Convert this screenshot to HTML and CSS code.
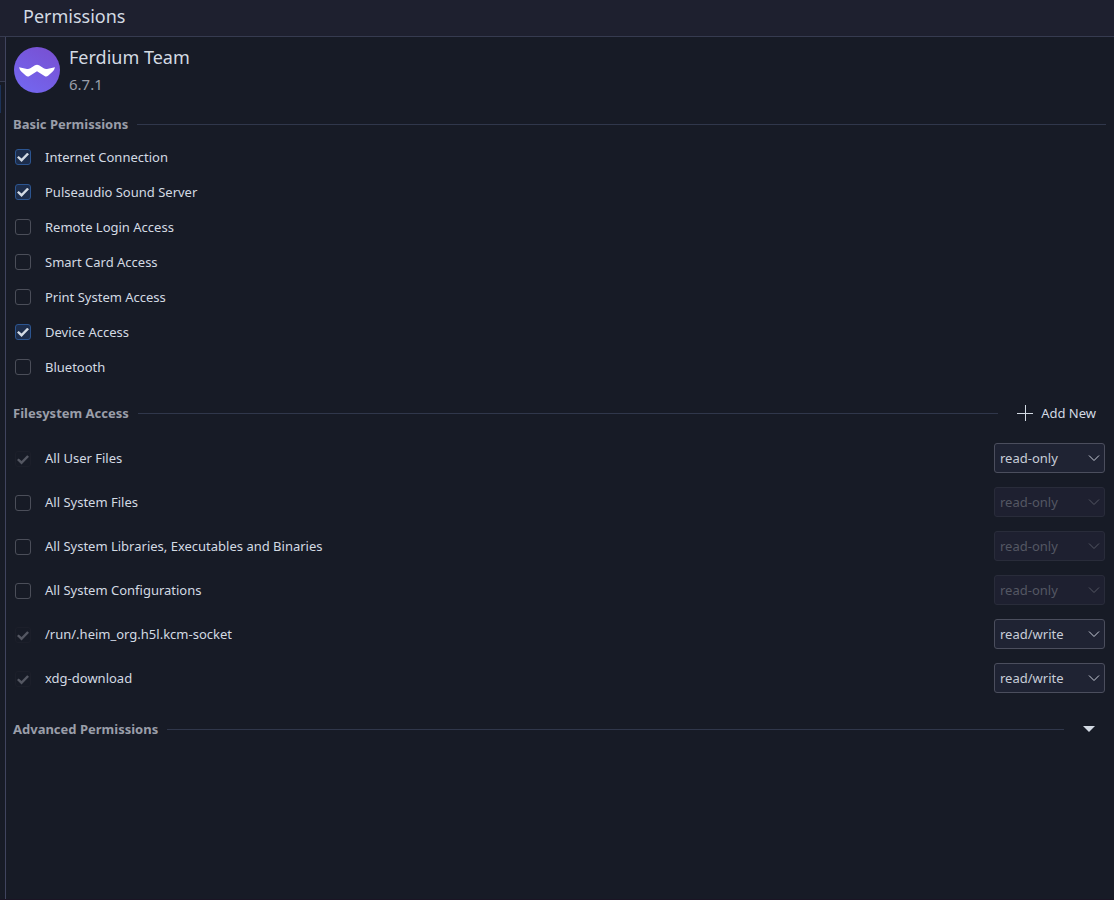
FILE: index.html
```html
<!DOCTYPE html>
<html lang="en">
<head>
    <meta charset="UTF-8">
    <meta name="viewport" content="width=device-width, initial-scale=1.0">
    <title>Permissions</title>
    <link rel="stylesheet" href="styles.css">
</head>
<body>
    <header class="titlebar">
        <h1>Permissions</h1>
    </header>

    <div class="window">
        <div class="sidebar">
            <div class="sidebar-search"></div>
            <div class="sidebar-item"></div>
        </div>

        <main class="content">
            <div class="app">
                <svg class="app-logo" viewBox="0 0 46 46" aria-hidden="true">
                    <defs>
                        <linearGradient id="logoFill" x1="0.2" y1="1" x2="0.8" y2="0">
                            <stop offset="0" stop-color="#7367f0"/>
                            <stop offset="1" stop-color="#7850d2"/>
                        </linearGradient>
                    </defs>
                    <circle cx="23" cy="23" r="23" fill="url(#logoFill)"/>
                    <path d="M5 20.300L13 22Q14.800 22.300 16.300 21.300L21 18.300Q23 17.200 25 18.300L29.700 21.300Q31.200 22.300 33 22L41 20.300Q40.500 22.800 38.500 24.800L34 28.800Q32.300 30 30.500 28.900L23 24.200L15.500 28.900Q13.700 30 12 28.800L7.500 24.800Q5.500 22.800 5 20.300Z" fill="#fff"/>
                </svg>
                <div>
                    <h2 class="app-name">Ferdium Team</h2>
                    <p class="app-version">6.7.1</p>
                </div>
            </div>

            <section class="basic">
                <div class="section-head">
                    <h3>Basic Permissions</h3>
                    <span class="line"></span>
                </div>
                <label class="row"><input type="checkbox" checked>Internet Connection</label>
                <label class="row"><input type="checkbox" checked>Pulseaudio Sound Server</label>
                <label class="row"><input type="checkbox">Remote Login Access</label>
                <label class="row"><input type="checkbox">Smart Card Access</label>
                <label class="row"><input type="checkbox">Print System Access</label>
                <label class="row"><input type="checkbox" checked>Device Access</label>
                <label class="row"><input type="checkbox">Bluetooth</label>
            </section>

            <section class="filesystem">
                <div class="section-head">
                    <h3>Filesystem Access</h3>
                    <span class="line"></span>
                    <button class="add-new" type="button">
                        <svg width="16" height="16" viewBox="0 0 16 16" aria-hidden="true">
                            <path d="M0 8.500H16M8.500 0V16" stroke="currentColor"/>
                        </svg>
                        Add New
                    </button>
                </div>
                <div class="row">
                    <label><input type="checkbox" checked disabled>All User Files</label>
                    <span class="combo">
                        <select aria-label="All User Files access">
                            <option selected>read-only</option>
                            <option>read/write</option>
                            <option>create</option>
                        </select>
                        <svg viewBox="0 0 12 8"><path d="M1 1.500L6 6.500L11 1.500"/></svg>
                    </span>
                </div>
                <div class="row">
                    <label><input type="checkbox">All System Files</label>
                    <span class="combo">
                        <select aria-label="All System Files access" disabled>
                            <option selected>read-only</option>
                            <option>read/write</option>
                            <option>create</option>
                        </select>
                        <svg viewBox="0 0 12 8"><path d="M1 1.500L6 6.500L11 1.500"/></svg>
                    </span>
                </div>
                <div class="row">
                    <label><input type="checkbox">All System Libraries, Executables and Binaries</label>
                    <span class="combo">
                        <select aria-label="All System Libraries access" disabled>
                            <option selected>read-only</option>
                            <option>read/write</option>
                            <option>create</option>
                        </select>
                        <svg viewBox="0 0 12 8"><path d="M1 1.500L6 6.500L11 1.500"/></svg>
                    </span>
                </div>
                <div class="row">
                    <label><input type="checkbox">All System Configurations</label>
                    <span class="combo">
                        <select aria-label="All System Configurations access" disabled>
                            <option selected>read-only</option>
                            <option>read/write</option>
                            <option>create</option>
                        </select>
                        <svg viewBox="0 0 12 8"><path d="M1 1.500L6 6.500L11 1.500"/></svg>
                    </span>
                </div>
                <div class="row">
                    <label><input type="checkbox" checked disabled>/run/.heim_org.h5l.kcm-socket</label>
                    <span class="combo">
                        <select aria-label="kcm-socket access">
                            <option>read-only</option>
                            <option selected>read/write</option>
                            <option>create</option>
                        </select>
                        <svg viewBox="0 0 12 8"><path d="M1 1.500L6 6.500L11 1.500"/></svg>
                    </span>
                </div>
                <div class="row">
                    <label><input type="checkbox" checked disabled>xdg-download</label>
                    <span class="combo">
                        <select aria-label="xdg-download access">
                            <option>read-only</option>
                            <option selected>read/write</option>
                            <option>create</option>
                        </select>
                        <svg viewBox="0 0 12 8"><path d="M1 1.500L6 6.500L11 1.500"/></svg>
                    </span>
                </div>
            </section>

            <section class="advanced">
                <div class="section-head">
                    <h3>Advanced Permissions</h3>
                    <span class="line"></span>
                    <button class="expand" type="button" aria-label="Show advanced permissions">
                        <svg width="12" height="6" viewBox="0 0 12 6" aria-hidden="true">
                            <path d="M0 0H12L6 6Z" fill="currentColor"/>
                        </svg>
                    </button>
                </div>
            </section>
        </main>
    </div>
</body>
</html>
```
FILE: styles.css
```css
* {
    box-sizing: border-box;
}
body {
    margin: 0;
    min-height: 100vh;
    display: flex;
    flex-direction: column;
    background: #171b26;
    border-bottom: 1px solid #1b1424;
    color: #d3dae3;
    font-family: "Noto Sans", sans-serif;
    font-size: 13px;
    line-height: 18px;
}
h1, h2, h3, p {
    margin: 0;
    font-weight: 400;
}
button, select {
    font: inherit;
    color: inherit;
}
.titlebar {
    height: 37px;
    padding: 4px 23px;
    background: #1e202f;
    border-bottom: 1px solid #363b50;
}
.titlebar h1 {
    font-size: 18px;
    line-height: 25px;
}

/* sidebar edge */
.window {
    flex: 1;
    display: flex;
}
.sidebar {
    width: 6px;
    border-right: 1px solid #40445e;
}
.sidebar-search {
    height: 45px;
    background: #1e202f;
    border-bottom: 1px solid #363b50;
}
.sidebar-item {
    width: 1px;
    height: 28px;
    margin-top: 3px;
    background: #1c3258;
}

.content {
    flex: 1;
    padding: 8px 8px 8px 7px;
}
.app {
    display: flex;
    gap: 9px;
    padding: 2px 1px;
}
.app-logo {
    width: 46px;
    height: 46px;
}
.app-name {
    font-size: 18px;
    line-height: 25px;
    margin-top: -2px;
}
.app-version {
    font-size: 15px;
    line-height: 20px;
    margin-top: 4px;
    color: #9a9ea9;
}

/* sections */
.section-head {
    display: flex;
    align-items: center;
    height: 34px;
    gap: 9px;
}
.section-head h3 {
    font-size: 13px;
    font-weight: 700;
    color: #9a9ea9;
}
.line {
    flex: 1;
    height: 1px;
    background: #30374b;
}
.basic {
    margin-top: 13px;
}
.filesystem {
    margin-top: 12px;
}
.advanced {
    margin-top: 12px;
}
.row {
    display: flex;
    align-items: center;
}
.basic .section-head {
    height: 30px;
}
.basic .row {
    height: 35px;
    padding-left: 2px;
}
.filesystem .row {
    height: 44px;
    padding: 0 1px 0 2px;
    justify-content: space-between;
}
.filesystem .section-head {
    margin-bottom: 6px;
}
.row label {
    display: flex;
    align-items: center;
}

/* checkboxes */
input[type="checkbox"] {
    appearance: none;
    display: grid;
    place-items: center;
    width: 16px;
    height: 16px;
    margin: 0 14px 0 0;
    border: 1px solid #4b4e59;
    border-radius: 3px;
}
input[type="checkbox"]:checked {
    background: #1d2d4b;
    border-color: #2c5590;
}
input[type="checkbox"]:checked::before {
    content: "";
    width: 12px;
    height: 10px;
    margin-top: 2px;
    background: #d3dae3;
    clip-path: polygon(0 49%, 14% 34%, 38% 60%, 85% 2%, 100% 18%, 38% 95%);
}
.filesystem input[type="checkbox"] {
    margin-top: 2px;
}
input[type="checkbox"]:disabled {
    background: none;
    border-color: #1c1f2a;
}
input[type="checkbox"]:disabled::before {
    background: #545762;
}

.add-new {
    display: flex;
    align-items: center;
    gap: 8px;
    height: 34px;
    margin-left: 10px;
    padding: 0 10px 0 0;
    border: none;
    background: none;
}
.expand {
    display: flex;
    margin-left: 10px;
    padding: 10px 11px 10px 0;
    border: none;
    background: none;
}

/* drop-downs */
.combo {
    display: grid;
    align-items: center;
    width: 111px;
}
.combo select, .combo svg {
    grid-area: 1 / 1;
}
.combo select {
    appearance: none;
    width: 100%;
    height: 30px;
    padding: 0 20px 0 5px;
    background: #1f2333;
    border: 1px solid #4b4e5d;
    border-radius: 3px;
    color: #c8cdd8;
}
.combo svg {
    justify-self: end;
    width: 12px;
    height: 8px;
    margin-right: 5px;
    fill: none;
    stroke: #c8cdd8;
    pointer-events: none;
}
.combo select:disabled {
    background: #1e2030;
    border-color: #292c3a;
    color: #545763;
    opacity: 1;
}
.combo select:disabled + svg {
    stroke: #545763;
}
```
